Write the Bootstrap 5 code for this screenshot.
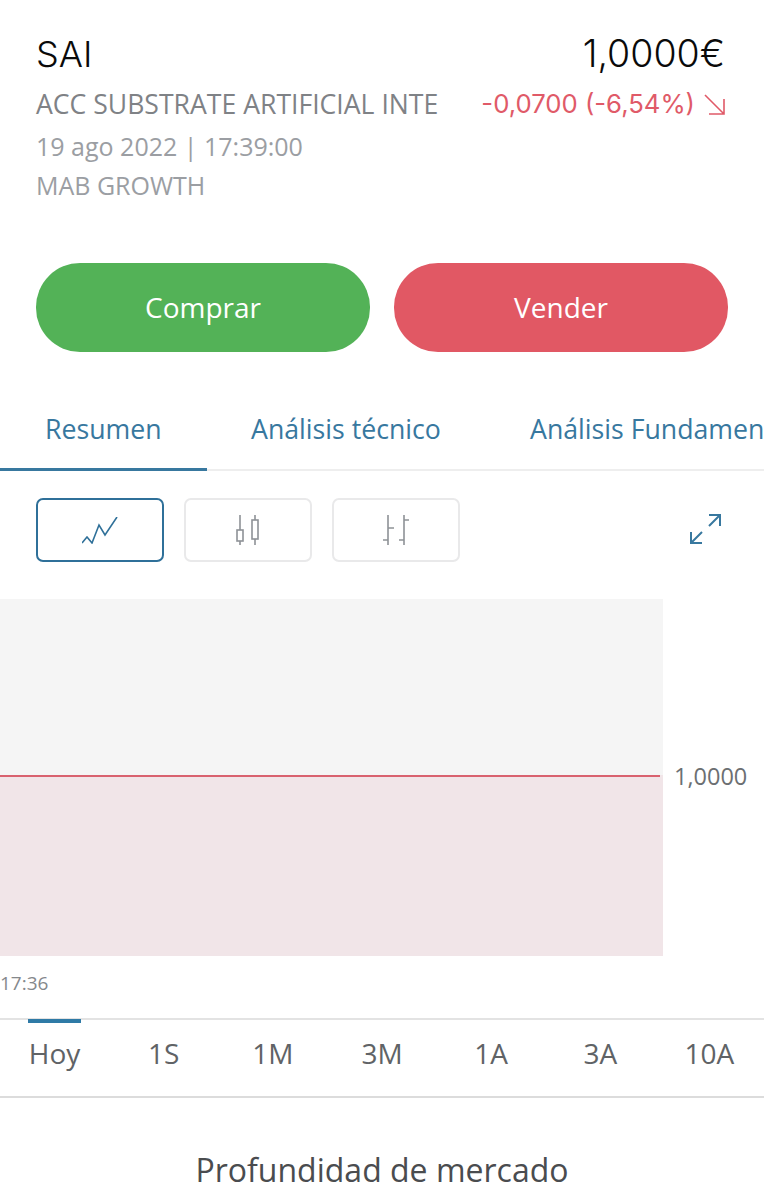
<!DOCTYPE html>
<html lang="es">
<head>
  <meta charset="UTF-8" />
  <meta name="viewport" content="width=device-width, initial-scale=1" />
  <title>SAI</title>
  <link href="https://cdn.jsdelivr.net/npm/bootstrap@5.3.0/dist/css/bootstrap.min.css" rel="stylesheet" />
  <style>
    html, body { height: 1200px; overflow: hidden; }
    body { background: #fff; font-family: "Open Sans", sans-serif; color: #555; }

    .quote-head { padding: 30px 39px 0 36px; height: 263px; }
    .quote-symbol, .quote-price { font-family: Inter, sans-serif; font-size: 36px; font-weight: 300; line-height: 48px; color: #0a0a0a; }
    .quote-price { font-size: 37.5px; }
    .quote-sub { margin-top: 5px; }
    .quote-name { font-size: 26.6px; line-height: 42px; color: #7f8286; white-space: nowrap; }
    .quote-change { font-family: Inter, sans-serif; font-size: 25.7px; line-height: 42px; color: #e05a68; white-space: nowrap; }
    .quote-change svg { margin-left: 9px; }
    .quote-meta { font-size: 25px; line-height: 39px; color: #9b9ea3; }
    .quote-date { margin-top: 1px; line-height: 40px; }

    .trade-row { padding: 0 36px; height: 89px; margin-bottom: 41px; }
    .trade-btn { flex: 0 0 334px; height: 89px; border: 0; border-radius: 44px; padding-bottom: 8px; color: #fff; font-size: 28px; }
    .trade-buy { background: #53b257; }
    .trade-sell { background: #e15864; }

    .tab-strip { height: 78px; box-shadow: inset 0 -2px 0 #eeeeee; overflow: hidden; white-space: nowrap; }
    .tab-item { height: 78px; font-size: 26.7px; line-height: 72px; color: #38789f; flex: none; }
    .tab-on { width: 207px; padding-left: 45px; border-bottom: 3px solid #38789f; }
    .tab-next { width: 279px; padding-left: 44px; }
    .tab-last { padding-left: 44px; }

    .tool-row { height: 128px; padding: 27px 36px 0; gap: 20px; }
    .tool-btn { width: 128px; height: 64px; border: 2px solid #e9e9ea; border-radius: 7px; background: #fff; padding: 0; }
    .tool-on { border-color: #2f7099; }
    .tool-expand { margin-left: auto; margin-right: 7px; margin-top: 15px; }

    .chart-wrap { height: 357px; }
    .chart-plot { width: 663px; }
    .chart-up { height: 176px; background: #f5f5f5; }
    .chart-line { height: 2px; background: linear-gradient(to right, #d9626f 660px, #f1e5e8 660px); }
    .chart-down { height: 179px; background: #f1e5e8; }
    .chart-axis { padding-top: 161px; padding-left: 11px; font-size: 23.5px; line-height: 32px; color: #6c6f72; }
    .chart-time { height: 62px; padding-top: 13px; font-size: 19px; line-height: 28px; color: #85888c; }

    .range-row { height: 80px; border-top: 2px solid #e3e3e3; border-bottom: 2px solid #dcdcdc; position: relative; }
    .range-item { flex: 1 1 0; text-align: center; font-size: 28px; line-height: 67px; color: #606366; }
    .range-mark { position: absolute; left: 28px; top: -1px; width: 53px; height: 4px; background: #2f7aa6; }

    .depth-title { padding-top: 52px; font-size: 32px; line-height: 40px; color: #4a4c4f; text-align: center; }
  </style>
</head>
<body>
  <!-- Header -->
  <div class="quote-head">
    <div class="d-flex justify-content-between align-items-center">
      <span class="quote-symbol">SAI</span>
      <span class="quote-price">1,0000€</span>
    </div>
    <div class="quote-sub d-flex justify-content-between align-items-center">
      <span class="quote-name">ACC SUBSTRATE ARTIFICIAL INTE</span>
      <span class="quote-change d-flex align-items-center">-0,0700 (-6,54%)
        <svg width="21" height="21" viewBox="0 0 21 21" fill="none" stroke="#e05a68" stroke-width="1.6"><path d="M1 1l19 19M20 5v15H5"/></svg>
      </span>
    </div>
    <div class="quote-meta quote-date">19 ago 2022 | 17:39:00</div>
    <div class="quote-meta">MAB GROWTH</div>
  </div>

  <!-- Buy / sell -->
  <div class="trade-row d-flex gap-4">
    <button type="button" class="btn trade-btn trade-buy">Comprar</button>
    <button type="button" class="btn trade-btn trade-sell">Vender</button>
  </div>

  <!-- Tabs -->
  <div class="tab-strip d-flex">
    <div class="tab-item tab-on">Resumen</div>
    <div class="tab-item tab-next">Análisis técnico</div>
    <div class="tab-item tab-last">Análisis Fundamental</div>
  </div>

  <!-- Chart type -->
  <div class="tool-row d-flex">
    <button type="button" class="tool-btn tool-on" aria-label="Línea">
      <svg width="36" height="27" viewBox="0 0 36 27" fill="none" stroke="#2f7099" stroke-width="1.6"><path d="M0 26l5-6 5 6 7-18 6 10L35 0"/></svg>
    </button>
    <button type="button" class="tool-btn" aria-label="Velas">
      <svg width="24" height="30" viewBox="0 0 24 30" fill="none" stroke="#8e9297" stroke-width="1.6"><path d="M4 0v15M4 26v4M19 0v5M19 24v6"/><rect x="1" y="15" width="6" height="11"/><rect x="16" y="5" width="6" height="19"/></svg>
    </button>
    <button type="button" class="tool-btn" aria-label="Barras">
      <svg width="27" height="30" viewBox="0 0 27 30" fill="none" stroke="#8e9297" stroke-width="1.6"><path d="M5 0v30M5 13h6M0 25h5M21 0v30M21 5h5M16 25h5"/></svg>
    </button>
    <svg class="tool-expand" width="32" height="32" viewBox="0 0 32 32" fill="none" stroke="#38789f" stroke-width="2"><path d="M20 2h11v11M31 2L20 13M2 19v11h11M2 30l11-11"/></svg>
  </div>

  <!-- Chart -->
  <div class="chart-wrap d-flex">
    <div class="chart-plot">
      <div class="chart-up"></div>
      <div class="chart-line"></div>
      <div class="chart-down"></div>
    </div>
    <div class="chart-axis">1,0000</div>
  </div>
  <div class="chart-time">17:36</div>

  <!-- Range -->
  <div class="range-row d-flex">
    <span class="range-mark"></span>
    <div class="range-item">Hoy</div>
    <div class="range-item">1S</div>
    <div class="range-item">1M</div>
    <div class="range-item">3M</div>
    <div class="range-item">1A</div>
    <div class="range-item">3A</div>
    <div class="range-item">10A</div>
  </div>

  <div class="depth-title">Profundidad de mercado</div>

  <script src="https://cdn.jsdelivr.net/npm/bootstrap@5.3.0/dist/js/bootstrap.bundle.min.js"></script>
</body>
</html>
